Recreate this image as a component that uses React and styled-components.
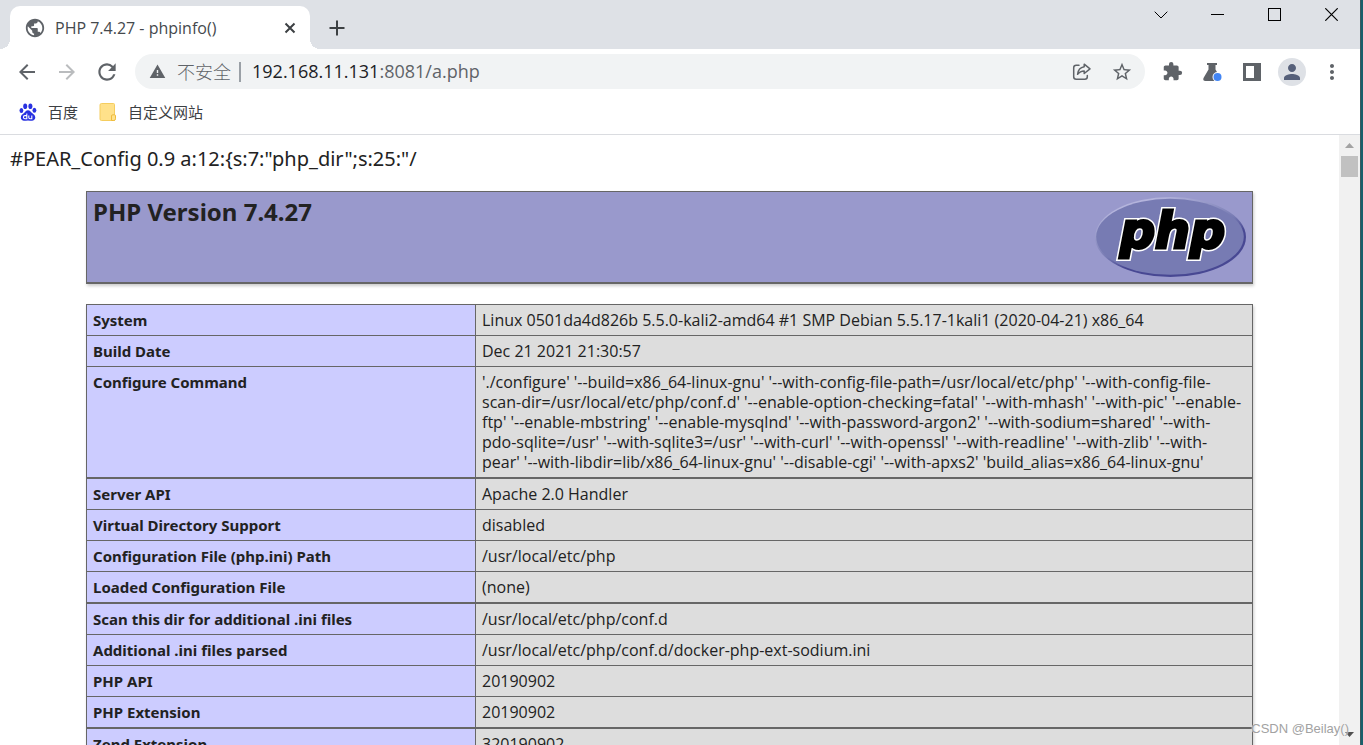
import React from "react";
import styled, { createGlobalStyle } from "styled-components";
import {
    MdArrowBack,
    MdArrowForward,
    MdExtension,
    MdMoreVert,
    MdPerson,
    MdPublic,
    MdRefresh,
    MdStarBorder,
    MdWarning,
} from "react-icons/md";

const GlobalStyle = createGlobalStyle`
    * {
        box-sizing: border-box;
    }
    body {
        margin: 0;
        overflow: hidden;
        font-family: "Noto Sans", "Noto Sans CJK SC", sans-serif;
        color: #222222;
    }
    svg {
        display: block;
        flex-shrink: 0;
    }
    button {
        border: none;
        padding: 0;
        background: none;
        font: inherit;
        color: inherit;
    }
`

const Desktop = styled.div`
    display: flex;
    height: 100vh;
    padding-right: 3px;
    background-color: #17606c;
`

const BrowserWindow = styled.div`
    flex: 1;
    min-width: 0;
    display: flex;
    flex-direction: column;
    background-color: #ffffff;
    border-right: 1px solid #3c5a60;
    margin-right: -1px;
`

const TabStrip = styled.div`
    display: flex;
    align-items: flex-start;
    height: 49px;
    padding-left: 10px;
    background-color: #dee1e6;
`

const Tab = styled.div`
    position: relative;
    display: flex;
    align-items: center;
    width: 300px;
    height: 43px;
    margin-top: 6px;
    padding: 0 12px 0 14px;
    border-radius: 10px 10px 0 0;
    background-color: #ffffff;
    color: #5f6368;

    &::before,
    &::after {
        content: "";
        position: absolute;
        bottom: 0;
        width: 10px;
        height: 10px;
    }
    &::before {
        left: -10px;
        background: radial-gradient(circle at 0 0, transparent 10px, #ffffff 10px);
    }
    &::after {
        right: -10px;
        background: radial-gradient(circle at 100% 0, transparent 10px, #ffffff 10px);
    }
`

const TabTitle = styled.span`
    flex: 1;
    margin-left: 9px;
    font-family: "Open Sans", sans-serif;
    font-size: 16px;
    white-space: nowrap;
    color: #45494d;
`

const TabButton = styled.button`
    display: flex;
    align-items: center;
    justify-content: center;
    width: ${({ $wide }) => ($wide ? "54px" : "16px")};
    height: ${({ $wide }) => ($wide ? "55px" : "16px")};
    color: #3c4043;
`

const WindowControls = styled.div`
    display: flex;
    margin-left: auto;
`

const WindowButton = styled.button`
    display: flex;
    align-items: center;
    justify-content: center;
    width: 57px;
    height: 29px;
    color: #000000;
`

const Toolbar = styled.div`
    display: flex;
    align-items: center;
    height: 45px;
    padding: 0 8px 0 7px;
    color: #5f6368;
`

const ToolButton = styled.button`
    display: flex;
    align-items: center;
    justify-content: center;
    width: 40px;
    height: 35px;
    color: ${({ $dim }) => ($dim ? "#babcbe" : "#5f6368")};
`

const Avatar = styled.span`
    display: flex;
    align-items: center;
    justify-content: center;
    width: 28px;
    height: 28px;
    border-radius: 50%;
    background-color: #dee1e6;
    color: #56607a;
`

const Omnibox = styled.div`
    flex: 1;
    display: flex;
    align-items: center;
    height: 35px;
    margin: 0 7px 0 8px;
    padding: 0 3px 0 14px;
    border-radius: 18px;
    background-color: #f1f3f4;
`

const Security = styled.span`
    margin-left: 11px;
    padding-right: 8px;
    border-right: 2px solid #9aa0a6;
    font-size: 18px;
    line-height: 20px;
    white-space: nowrap;
    font-weight: 300;
`

const Address = styled.label`
    flex: 1;
    position: relative;
    margin-left: 11px;
    font-family: "Open Sans", sans-serif;
    font-size: 18px;
    line-height: 24px;
    padding-bottom: 1px;
    color: #5f6368;

    b {
        font-weight: 400;
        color: #202124;
    }
`

const AddressInput = styled.input`
    position: absolute;
    inset: 0;
    width: 100%;
    padding: 0;
    border: none;
    outline: none;
    background: none;
    font: inherit;
    color: transparent;
`

const Bookmarks = styled.nav`
    display: flex;
    align-items: center;
    gap: 21px;
    height: 41px;
    padding: 0 19px 4px;
    border-bottom: 1px solid #dadce0;
`

const Bookmark = styled.a`
    display: flex;
    align-items: center;
    gap: 11px;
    font-size: 15px;
    line-height: 20px;
    color: #3c4043;
    text-decoration: none;
`

const Viewport = styled.div`
    flex: 1;
    min-height: 0;
    display: flex;
`

const Page = styled.main`
    flex: 1;
    overflow: hidden;
    padding: 10px;
`

const Preamble = styled.p`
    margin: 0 0 18px;
    font-size: 20px;
    line-height: 28px;
`

const Center = styled.div`
    display: flex;
    flex-direction: column;
    align-items: center;
    gap: 20px;
`

const Banner = styled.header`
    display: flex;
    justify-content: space-between;
    width: 1167px;
    padding: 5px 6px;
    border: 1px solid #666666;
    border-bottom-width: 2px;
    background-color: #9999cc;
    box-shadow: 1px 2px 3px #cccccc;
`

const Version = styled.h1`
    margin: 0;
    font-size: 24px;
    line-height: 30px;
    font-weight: 700;
`

const InfoTable = styled.table`
    width: 1167px;
    table-layout: fixed;
    border-collapse: collapse;
    box-shadow: 1px 2px 3px #cccccc;
    line-height: 20px;
`

const InfoRow = styled.tr`
    th,
    td {
        padding: 5px 6px;
        border: 1px solid #666666;
        border-bottom-width: ${({ $thick }) => ($thick ? "2px" : "1px")};
        text-align: left;
        vertical-align: top;
    }
    th {
        width: 389px;
        background-color: #ccccff;
        font-size: 15px;
        font-weight: 700;
    }
    td {
        background-color: #dddddd;
        font-family: "Open Sans", sans-serif;
        font-size: 16px;
        white-space: pre-line;
    }
`

const Scrollbar = styled.div`
    display: flex;
    flex-direction: column;
    align-items: center;
    justify-content: space-between;
    width: 21px;
    background-color: #f1f1f1;
`

const ScrollTop = styled.div`
    display: flex;
    flex-direction: column;
`

const ScrollButton = styled.button`
    display: flex;
    align-items: center;
    justify-content: center;
    width: 17px;
    height: 21px;
    color: ${({ $dim }) => ($dim ? "#a3a3a3" : "#505050")};
`

const Thumb = styled.div`
    height: 21px;
    background-color: #c1c1c1;
`

const Watermark = styled.div`
    position: absolute;
    right: 14px;
    bottom: 8px;
    font-family: "Liberation Sans", sans-serif;
    font-size: 13px;
    line-height: 16px;
    color: #a2a2a2;
    text-shadow: 0 0 1px #ffffff;
`

const CONFIGURE = [
    "'./configure' '--build=x86_64-linux-gnu' '--with-config-file-path=/usr/local/etc/php' '--with-config-file-",
    "scan-dir=/usr/local/etc/php/conf.d' '--enable-option-checking=fatal' '--with-mhash' '--with-pic' '--enable-",
    "ftp' '--enable-mbstring' '--enable-mysqlnd' '--with-password-argon2' '--with-sodium=shared' '--with-",
    "pdo-sqlite=/usr' '--with-sqlite3=/usr' '--with-curl' '--with-openssl' '--with-readline' '--with-zlib' '--with-",
    "pear' '--with-libdir=lib/x86_64-linux-gnu' '--disable-cgi' '--with-apxs2' 'build_alias=x86_64-linux-gnu'",
].join("\n")

const rows = [
    { name: "System", value: "Linux 0501da4d826b 5.5.0-kali2-amd64 #1 SMP Debian 5.5.17-1kali1 (2020-04-21) x86_64" },
    { name: "Build Date", value: "Dec 21 2021 21:30:57" },
    { name: "Configure Command", value: CONFIGURE, thick: true },
    { name: "Server API", value: "Apache 2.0 Handler" },
    { name: "Virtual Directory Support", value: "disabled" },
    { name: "Configuration File (php.ini) Path", value: "/usr/local/etc/php" },
    { name: "Loaded Configuration File", value: "(none)", thick: true },
    { name: "Scan this dir for additional .ini files", value: "/usr/local/etc/php/conf.d" },
    { name: "Additional .ini files parsed", value: "/usr/local/etc/php/conf.d/docker-php-ext-sodium.ini" },
    { name: "PHP API", value: "20190902" },
    { name: "PHP Extension", value: "20190902", thick: true },
    { name: "Zend Extension", value: "320190902" },
]

const PhpLogo = () => (
    <svg width="151" height="80" viewBox="0 0 151 80">
        <defs>
            <linearGradient id="rim" x1="0.2" y1="0" x2="0.8" y2="1">
                <stop offset="0.1" stopColor="#b4b4dc" />
                <stop offset="0.5" stopColor="#777bb3" />
                <stop offset="0.65" stopColor="#484893" />
                <stop offset="1" stopColor="#484893" />
            </linearGradient>
        </defs>
        <ellipse cx="75.5" cy="40" rx="75.5" ry="40" fill="url(#rim)" />
        <ellipse cx="75" cy="39.8" rx="73.8" ry="38" fill="#777bb3" />
        <g fontFamily="DejaVu Sans" fontSize="49" fontWeight="700" fontStyle="italic">
            <text x="25" y="51" fill="#ffffff" stroke="#ffffff" strokeWidth="6" aria-hidden="true">
                php
            </text>
            <text x="25" y="51" fill="#000000" stroke="#000000" strokeWidth="3">
                php
            </text>
        </g>
    </svg>
)

const BaiduIcon = () => (
    <svg width="18" height="18" viewBox="0 0 18 18" fill="#2932e1">
        <ellipse cx="2.4" cy="7.6" rx="1.9" ry="2.5" />
        <ellipse cx="6.2" cy="3.2" rx="2" ry="2.8" />
        <ellipse cx="11.4" cy="3.2" rx="2" ry="2.8" />
        <ellipse cx="15.4" cy="7.2" rx="1.9" ry="2.5" />
        <path d="M9 7.2c-2 0-2.8 1.6-4 2.9C3.6 11.3 1.8 12.3 1.8 14.5c0 2 1.5 3.2 3.2 3.2 1.5 0 2.5-.3 4-.3s2.5.3 4 .3c1.7 0 3.3-1.2 3.3-3.2 0-2.2-1.9-3.2-3.2-4.4C11.8 8.8 11 7.2 9 7.2z" />
        <path
            d="M7.8 10.5v5.3H6a1.5 1.5 0 0 1 0-3.2h1.8M9.8 12.4v2.2q0 1.2 1.2 1.2h1.8v-3.4"
            fill="none"
            stroke="#ffffff"
            strokeWidth="1.1"
        />
    </svg>
)

const FolderIcon = () => (
    <svg width="18" height="18" viewBox="0 0 18 18">
        <path d="M2.5.5h12a1 1 0 0 1 1 1v16h-13a1.5 1.5 0 0 1-1.5-1.5v-14A1.5 1.5 0 0 1 2.5.5z" fill="#ffe18a" stroke="#f5cd5e" />
        <path d="M12.5 17.5v-4.5q0-1.2 1.3-1.2h1.7q1 0 1 1v3q0 1.7-1.7 1.7z" fill="#ffe18a" stroke="#eebb3c" />
    </svg>
)

const ShareIcon = () => (
    <svg width="20" height="18" viewBox="0 0 20 18" fill="none" stroke="#5f6368" strokeWidth="1.5" strokeLinejoin="round">
        <path d="M7 2.2H4.2Q1.7 2.2 1.7 4.7v9q0 2.5 2.5 2.5h8.6q2.5 0 2.5-2.5v-1.2" strokeLinecap="round" />
        <path d="M12.2 1.2l5.8 4.6-5.8 4.7V7.9c-3 0-4.8 1-6.6 3.4.4-3.8 2.6-6.9 6.6-7.5z" />
    </svg>
)

const FlaskIcon = () => (
    <svg width="20" height="20" viewBox="0 0 20 20">
        <path d="M5 1h10v2h-1.5v4.5l5 8.5q1 3-2 3h-13q-3 0-2-3l5-8.5V3H5z" fill="#5f6368" />
        <circle cx="15.5" cy="15" r="5" fill="#ffffff" />
        <circle cx="15.5" cy="15" r="4" fill="#4285f4" />
    </svg>
)

const PanelIcon = () => (
    <svg width="18" height="18" viewBox="0 0 18 18">
        <path d="M0 0h18v18H0zM3 3v12h8V3z" fill="#5f6368" fillRule="evenodd" />
    </svg>
)

const App = () => {
    return (
        <>
            <GlobalStyle />
            <Desktop>
                <BrowserWindow>
                    <TabStrip>
                        <Tab>
                            <MdPublic size={22} />
                            <TabTitle>PHP 7.4.27 - phpinfo()</TabTitle>
                            <TabButton aria-label="Close tab">
                                <svg width="12" height="12" viewBox="0 0 12 12" stroke="currentColor" strokeWidth="2">
                                    <path d="M1.5 1.5l9 9M10.5 1.5l-9 9" />
                                </svg>
                            </TabButton>
                        </Tab>
                        <TabButton $wide aria-label="New tab">
                            <svg width="16" height="16" viewBox="0 0 16 16" stroke="currentColor" strokeWidth="2">
                                <path d="M8 .5v15M.5 8h15" />
                            </svg>
                        </TabButton>
                        <WindowControls>
                            <WindowButton aria-label="Search tabs">
                                <svg width="14" height="8" viewBox="0 0 14 8" fill="none" stroke="currentColor">
                                    <path d="M.7.7L7 7 13.3.7" />
                                </svg>
                            </WindowButton>
                            <WindowButton aria-label="Minimize">
                                <svg width="13" height="1" viewBox="0 0 13 1">
                                    <rect width="13" height="1" />
                                </svg>
                            </WindowButton>
                            <WindowButton aria-label="Maximize">
                                <svg width="13" height="13" viewBox="0 0 13 13" fill="none" stroke="currentColor">
                                    <rect x="0.5" y="0.5" width="12" height="12" />
                                </svg>
                            </WindowButton>
                            <WindowButton aria-label="Close">
                                <svg width="13" height="13" viewBox="0 0 13 13" stroke="currentColor" strokeWidth="1.2">
                                    <path d="M.3.3l12.4 12.4M12.7.3L.3 12.7" />
                                </svg>
                            </WindowButton>
                        </WindowControls>
                    </TabStrip>

                    <Toolbar>
                        <ToolButton aria-label="Back"><MdArrowBack size={24} /></ToolButton>
                        <ToolButton $dim aria-label="Forward"><MdArrowForward size={24} /></ToolButton>
                        <ToolButton aria-label="Reload"><MdRefresh size={26} /></ToolButton>
                        <Omnibox>
                            <MdWarning size={17} />
                            <Security>不安全</Security>
                            <Address>
                                <b>192.168.11.131</b>:8081/a.php
                                <AddressInput aria-label="Address" />
                            </Address>
                            <ToolButton aria-label="Share"><ShareIcon /></ToolButton>
                            <ToolButton aria-label="Bookmark"><MdStarBorder size={22} /></ToolButton>
                        </Omnibox>
                        <ToolButton aria-label="Extensions"><MdExtension size={21} /></ToolButton>
                        <ToolButton aria-label="Labs"><FlaskIcon /></ToolButton>
                        <ToolButton aria-label="Side panel"><PanelIcon /></ToolButton>
                        <ToolButton aria-label="Profile"><Avatar><MdPerson size={24} /></Avatar></ToolButton>
                        <ToolButton aria-label="Menu"><MdMoreVert size={24} /></ToolButton>
                    </Toolbar>

                    <Bookmarks>
                        <Bookmark href="#"><BaiduIcon />百度</Bookmark>
                        <Bookmark href="#"><FolderIcon />自定义网站</Bookmark>
                    </Bookmarks>

                    <Viewport>
                        <Page>
                            <Preamble>#PEAR_Config 0.9 a:12:&#123;s:7:"php_dir";s:25:"/</Preamble>
                            <Center>
                                <Banner>
                                    <Version>PHP Version 7.4.27</Version>
                                    <a href="#" aria-label="PHP"><PhpLogo /></a>
                                </Banner>
                                <InfoTable>
                                    <tbody>
                                        {rows.map(({ name, value, thick }) => (
                                            <InfoRow key={name} $thick={thick}>
                                                <th scope="row">{name}</th>
                                                <td>{value}</td>
                                            </InfoRow>
                                        ))}
                                    </tbody>
                                </InfoTable>
                            </Center>
                        </Page>
                        <Scrollbar>
                            <ScrollTop>
                                <ScrollButton $dim aria-label="Scroll up">
                                    <svg width="9" height="5" viewBox="0 0 9 5" fill="currentColor">
                                        <path d="M0 5L4.5 0 9 5z" />
                                    </svg>
                                </ScrollButton>
                                <Thumb />
                            </ScrollTop>
                            <ScrollButton aria-label="Scroll down">
                                <svg width="9" height="5" viewBox="0 0 9 5" fill="currentColor">
                                    <path d="M0 0L4.5 5 9 0z" />
                                </svg>
                            </ScrollButton>
                        </Scrollbar>
                    </Viewport>
                </BrowserWindow>
            </Desktop>
            <Watermark>CSDN @Beilay()</Watermark>
        </>
    )
}
export default App;
